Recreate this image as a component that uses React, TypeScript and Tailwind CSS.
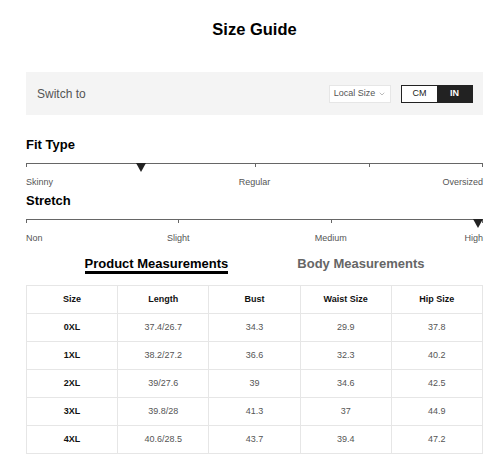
import React from 'react';
import { ChevronDown } from 'lucide-react';

interface Row {
  size: string;
  length: string;
  bust: string;
  waist: string;
  hip: string;
}

const rows: Row[] = [
  { size: '0XL', length: '37.4/26.7', bust: '34.3', waist: '29.9', hip: '37.8' },
  { size: '1XL', length: '38.2/27.2', bust: '36.6', waist: '32.3', hip: '40.2' },
  { size: '2XL', length: '39/27.6', bust: '39', waist: '34.6', hip: '42.5' },
  { size: '3XL', length: '39.8/28', bust: '41.3', waist: '37', hip: '44.9' },
  { size: '4XL', length: '40.6/28.5', bust: '43.7', waist: '39.4', hip: '47.2' },
];

const Marker = () => (
  <svg width="10" height="9" viewBox="0 0 10 9" className="block">
    <path d="M0 0 H10 L5 9 Z" fill="#222" />
  </svg>
);

const Tick = ({ left }: { left: string }) => (
  <div className="absolute top-0 w-px h-[4px] bg-[#666]" style={{ left }} />
);

const App: React.FC = () => {
  return (
    <div className="w-[500px] h-[462px] bg-white overflow-hidden font-['Liberation_Sans',Arial,sans-serif]">
      <div className="w-[457px] ml-[26px]">
        {/* Header */}
        <div className="h-[57px] flex items-center justify-center">
          <h1 className="text-[16.5px] leading-5 font-bold text-black">Size Guide</h1>
        </div>

        {/* Switch bar */}
        <div className="mt-[15px] h-[43px] bg-[#f4f4f4] flex items-center justify-between pl-[11px] pr-[10px]">
          <span className="text-[12px] text-[#555]">Switch to</span>
          <div className="flex items-center gap-[10px]">
            <div className="h-[18px] w-[62px] bg-white border border-[#e6e6e6] flex items-center justify-center gap-[3px] text-[9px] text-[#555]">
              Local Size
              <ChevronDown size={8} strokeWidth={1.5} className="text-[#777]" />
            </div>
            <div className="flex h-[18px] border border-[#222] text-[9px]">
              <div className="w-[35px] flex items-center justify-center bg-white text-[#222]">CM</div>
              <div className="w-[35px] flex items-center justify-center bg-[#222] text-white font-bold">IN</div>
            </div>
          </div>
        </div>

        {/* Fit Type */}
        <div className="mt-[22px]">
          <h2 className="text-[13px] leading-4 font-bold text-black">Fit Type</h2>
          <div className="relative mt-[10px] h-px bg-[#666]">
            <Tick left="0" />
            <Tick left="50%" />
            <Tick left="75%" />
            <Tick left="calc(100% - 1px)" />
            <div className="absolute top-0 left-[110px]">
              <Marker />
            </div>
          </div>
          <div className="grid grid-cols-3 mt-[13px] text-[9px] leading-[11px] text-[#555]">
            <span className="text-left">Skinny</span>
            <span className="text-center">Regular</span>
            <span className="text-right">Oversized</span>
          </div>
        </div>

        {/* Stretch */}
        <div className="mt-[5px]">
          <h2 className="text-[13px] leading-4 font-bold text-black">Stretch</h2>
          <div className="relative mt-[10px] h-px bg-[#666]">
            <Tick left="0" />
            <Tick left="33.33%" />
            <Tick left="66.66%" />
            <Tick left="calc(100% - 1px)" />
            <div className="absolute top-0 right-0">
              <Marker />
            </div>
          </div>
          <div className="grid grid-cols-6 mt-[13px] text-[9px] leading-[11px] text-[#555]">
            <span className="text-left">Non</span>
            <span className="col-span-2 text-center">Slight</span>
            <span className="col-span-2 text-center">Medium</span>
            <span className="text-right">High</span>
          </div>
        </div>

        {/* Tabs */}
        <div className="mt-[13px] flex justify-center items-start gap-[69px]">
          <span className="text-[13px] leading-[13px] font-bold text-black border-b-[3px] border-black pb-px">
            Product Measurements
          </span>
          <span className="text-[13px] leading-[13px] font-bold text-[#666]">Body Measurements</span>
        </div>

        {/* Table */}
        <table className="mt-[11px] w-full table-fixed border-collapse text-[9px]">
          <thead>
            <tr className="h-[28px]">
              {['Size', 'Length', 'Bust', 'Waist Size', 'Hip Size'].map((h) => (
                <th key={h} className="border border-[#e6e6e6] font-bold text-[#111] text-center">
                  {h}
                </th>
              ))}
            </tr>
          </thead>
          <tbody>
            {rows.map((r) => (
              <tr key={r.size} className="h-[28px]">
                <td className="border border-[#e6e6e6] text-center font-bold text-[#111]">{r.size}</td>
                <td className="border border-[#e6e6e6] text-center text-[#555]">{r.length}</td>
                <td className="border border-[#e6e6e6] text-center text-[#555]">{r.bust}</td>
                <td className="border border-[#e6e6e6] text-center text-[#555]">{r.waist}</td>
                <td className="border border-[#e6e6e6] text-center text-[#555]">{r.hip}</td>
              </tr>
            ))}
          </tbody>
        </table>
      </div>
    </div>
  );
};

export default App;
